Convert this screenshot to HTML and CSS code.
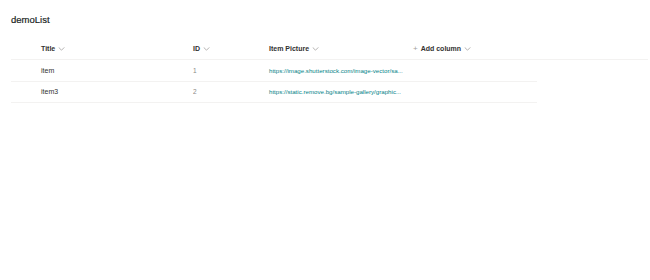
FILE: index.html
```html
<!DOCTYPE html>
<html>
<head>
<meta charset="utf-8">
<link rel="stylesheet" href="styles.css">
</head>
<body>
<div class="page">
  <h1 class="title">demoList</h1>
  <div class="list">
    <div class="header">
      <div class="cell c-title">Title <svg class="chev" viewBox="0 0 8 5"><path d="M0.5 0.5 L4 4 L7.5 0.5"/></svg></div>
      <div class="cell c-id">ID <svg class="chev" viewBox="0 0 8 5"><path d="M0.5 0.5 L4 4 L7.5 0.5"/></svg></div>
      <div class="cell c-pic">Item Picture <svg class="chev" viewBox="0 0 8 5"><path d="M0.5 0.5 L4 4 L7.5 0.5"/></svg></div>
      <div class="cell c-add"><span class="plus">+</span> Add column <svg class="chev" viewBox="0 0 8 5"><path d="M0.5 0.5 L4 4 L7.5 0.5"/></svg></div>
    </div>
    <div class="row">
      <div class="cell c-title">item</div>
      <div class="cell c-id num">1</div>
      <div class="cell c-pic link">https://image.shutterstock.com/image-vector/sa...</div>
    </div>
    <div class="row">
      <div class="cell c-title">item3</div>
      <div class="cell c-id num">2</div>
      <div class="cell c-pic link">https://static.remove.bg/sample-gallery/graphic...</div>
    </div>
  </div>
</div>
</body>
</html>
```
FILE: styles.css
```css
html, body {
  margin: 0;
  padding: 0;
  background: #ffffff;
}
body {
  font-family: "Liberation Sans", Arial, sans-serif;
  color: #323130;
}
.page {
  padding: 13px 2px 0 11px;
}
.title {
  margin: 0;
  font-size: 9.5px;
  font-weight: normal;
  color: #201f1e;
  line-height: 14px;
  -webkit-text-stroke: 0.2px #201f1e;
}
.list {
  margin-top: 11px;
}
.header {
  display: flex;
  align-items: center;
  height: 21px;
  border-bottom: 1px solid #f3f2f1;
  font-size: 7px;
  font-weight: bold;
  color: #323130;
}
.row {
  display: flex;
  align-items: center;
  width: 526px;
  height: 20.5px;
  border-bottom: 1px solid #f3f2f1;
  font-size: 7px;
  color: #323130;
}
.cell {
  display: flex;
  align-items: center;
  white-space: nowrap;
}
.c-title { width: 152px; padding-left: 30px; }
.c-id { width: 76px; }
.c-pic { width: 144px; }
.chev {
  width: 7px;
  height: 4px;
  margin-left: 3px;
  fill: none;
  stroke: #8a8886;
  stroke-width: 0.8;
}
.plus {
  color: #a19f9d;
  font-weight: normal;
  margin-right: 3px;
  font-size: 8px;
}
.num {
  color: #8a8886;
  font-size: 6.5px;
}
.link {
  color: #038387;
  font-size: 6.15px;
}
```
